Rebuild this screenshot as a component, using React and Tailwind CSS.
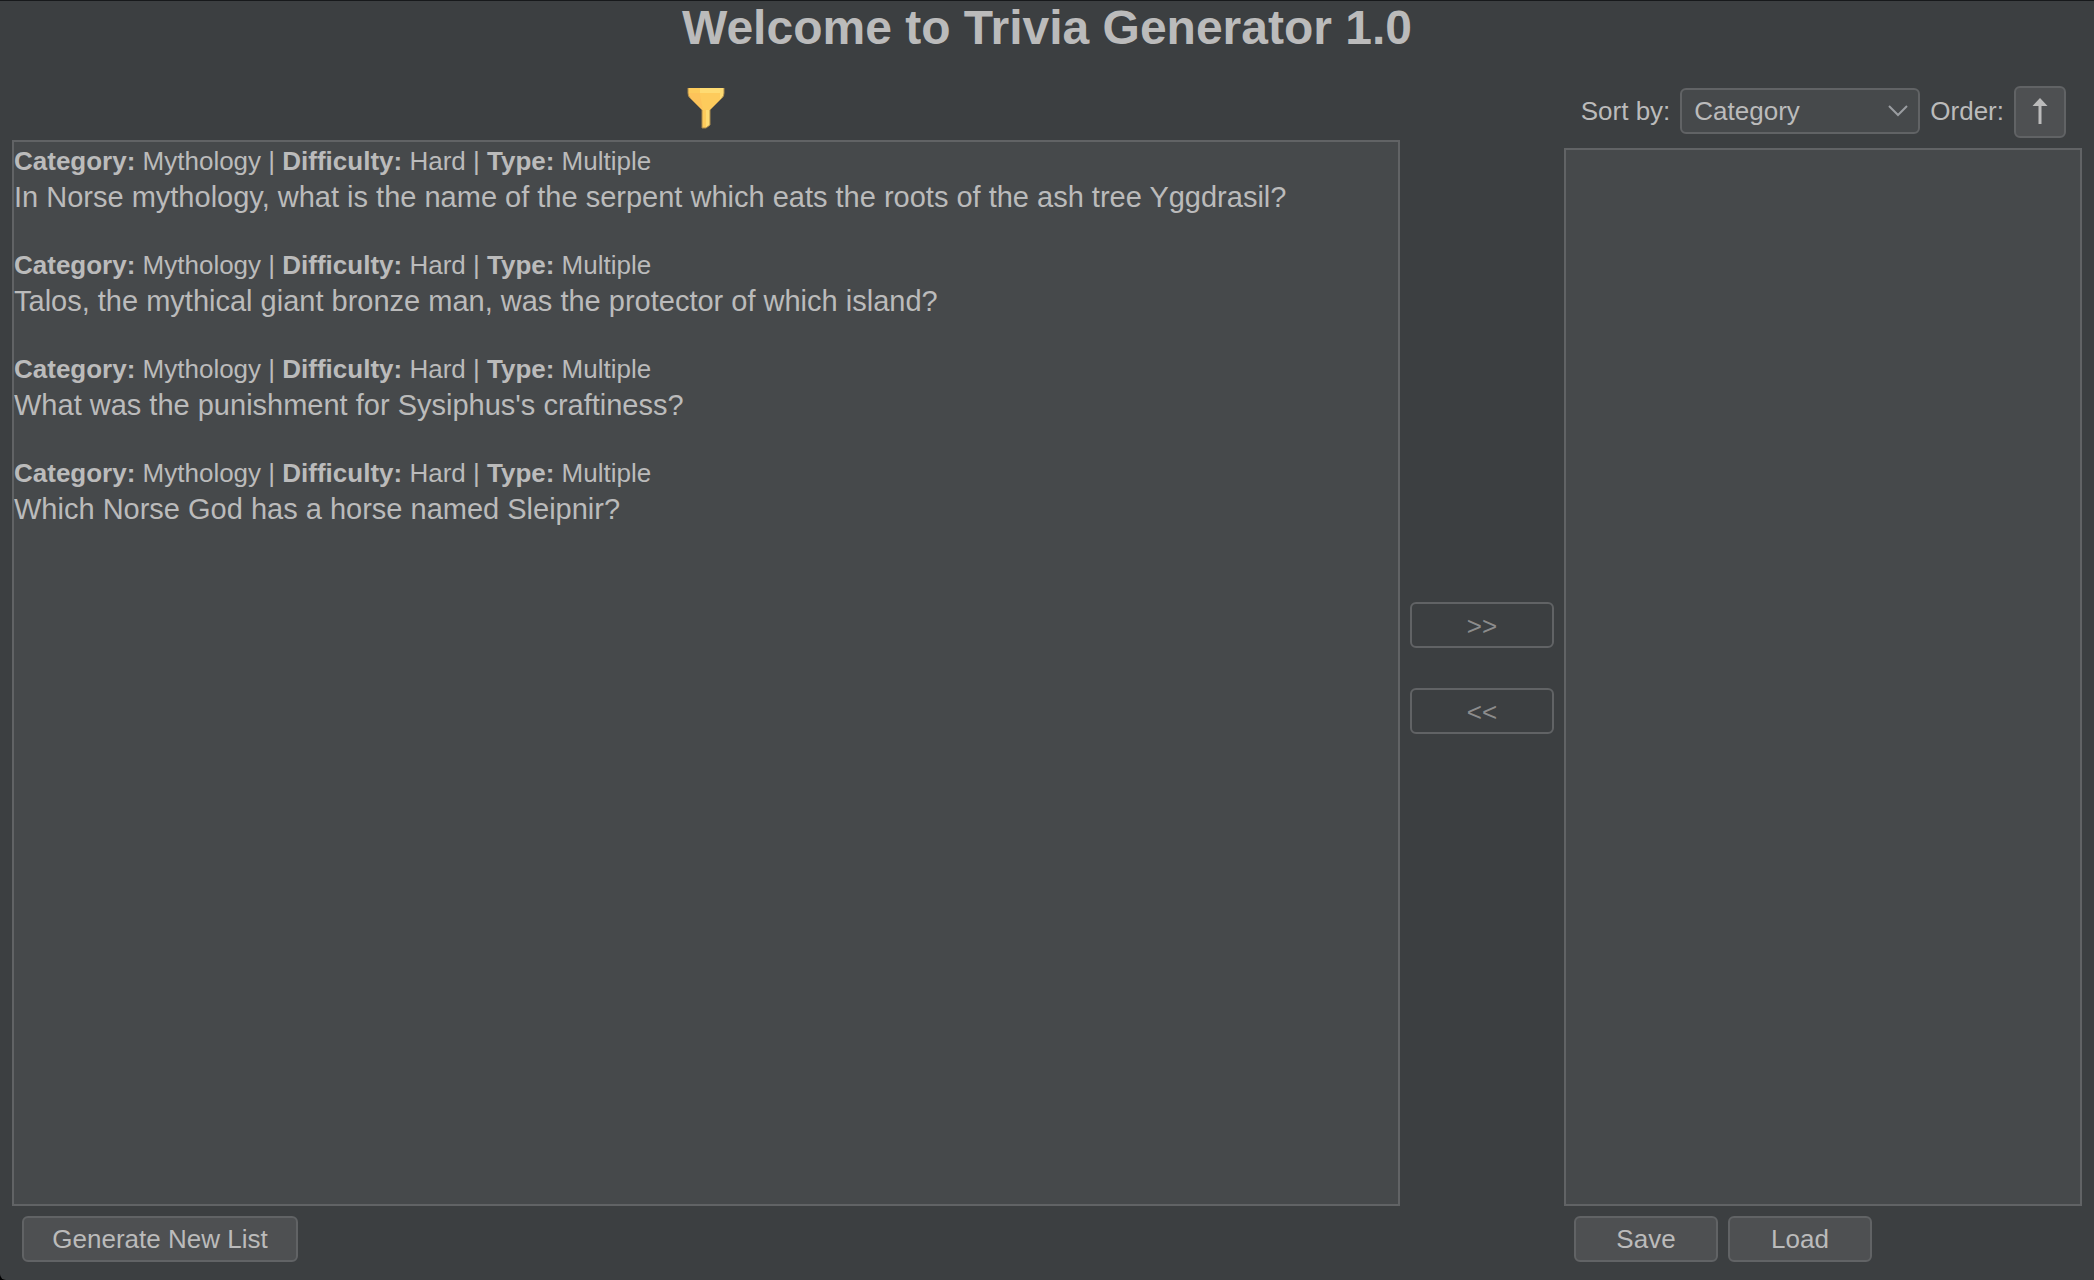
const questions = [
  "In Norse mythology, what is the name of the serpent which eats the roots of the ash tree Yggdrasil?",
  "Talos, the mythical giant bronze man, was the protector of which island?",
  "What was the punishment for Sysiphus's craftiness?",
  "Which Norse God has a horse named Sleipnir?",
];

const button =
  "flex h-[46px] items-center justify-center rounded-md border-2 border-[#616365] bg-[#4e5052] text-[26px] leading-8";

const moveButton =
  "h-[46px] w-36 rounded-md border-2 border-[#616365] pt-0.5 text-[26px] leading-8 text-[#8c8c8c]";

function FunnelIcon() {
  return (
    <svg width="38" height="42" viewBox="0 0 38 42" aria-hidden="true">
      <path d="M1 1H37V6Q37 9 35 11L23 23V38L19 41H15V23L3 11Q1 9 1 6Z" fill="#fdcb5c" />
      <path d="M1 1H13V8L16 23L3 11Q1 9 1 6Z" fill="#fdc35a" />
      <path d="M13 1H37V6H13Z" fill="#fedb73" />
      <path d="M1 1H13V6H1Z" fill="#fdcb5c" />
      <path d="M37 1V6Q37 9 35 11L33 13V1Z" fill="#fedb73" />
      <path d="M19 23H23V38L19 40Z" fill="#fedb73" />
      <path d="M1 1V6Q1 9 3 11L15 23V41H19L23 38V23L35 11Q37 9 37 6V1" fill="none" stroke="#a8894d" strokeWidth="1" />
    </svg>
  );
}

export default function App() {
  return (
    <div className="bg-black">
      <main className="flex h-screen flex-col rounded-bl-md border-t border-[#17191b] bg-[#3c3f41] px-3 font-['Liberation_Sans',sans-serif] text-[#bbbbbb]">
        <h1 className="h-[55px] shrink-0 text-center text-[48px] leading-[54px] font-bold">
          Welcome to Trivia Generator 1.0
        </h1>
        <div className="grid min-h-0 flex-1 grid-cols-[minmax(0,1fr)_164px_518px]">
          <section className="flex min-h-0 flex-col">
            <div className="flex h-[84px] shrink-0 items-end justify-center pb-[11px]">
              <button type="button" aria-label="Filter">
                <FunnelIcon />
              </button>
            </div>
            <ul className="min-h-0 flex-1 overflow-hidden border-2 border-[#616365] bg-[#46494b] pt-0.5">
              {questions.map((question) => (
                <li key={question} className="h-[104px]">
                  <p className="text-[26px] leading-[34px]">
                    <b>Category:</b> Mythology | <b>Difficulty:</b> Hard | <b>Type:</b> Multiple
                  </p>
                  <p className="text-[29px] leading-[38px]">{question}</p>
                </li>
              ))}
            </ul>
            <div className="flex h-[74px] shrink-0 items-start px-2.5 pt-2.5">
              <button type="button" className={`${button} w-[276px]`}>
                Generate New List
              </button>
            </div>
          </section>

          <section className="flex flex-col items-center justify-center gap-10">
            <button type="button" disabled className={moveButton}>
              &gt;&gt;
            </button>
            <button type="button" disabled className={moveButton}>
              &lt;&lt;
            </button>
          </section>

          <section className="flex min-h-0 flex-col">
            <div className="flex h-[92px] shrink-0 items-end justify-end pr-4 pb-2.5 text-[26px] leading-8">
              <div className="flex h-[52px] items-start gap-2.5">
                <div className="flex h-[50px] items-center gap-2.5">
                  <label htmlFor="sort">Sort by:</label>
                  <div className="grid w-60 items-center">
                    <select
                      id="sort"
                      className="col-start-1 row-start-1 h-[46px] w-full appearance-none rounded-md border-2 border-[#616365] bg-[#46494b] pl-3"
                    >
                      <option>Category</option>
                      <option>Difficulty</option>
                      <option>Type</option>
                    </select>
                    <svg
                      className="pointer-events-none col-start-1 row-start-1 mr-3 justify-self-end"
                      width="20"
                      height="12"
                      viewBox="0 0 20 12"
                      fill="none"
                      stroke="#9a9da1"
                      strokeWidth="2"
                      aria-hidden="true"
                    >
                      <path d="M1 1L10 10L19 1" />
                    </svg>
                  </div>
                  <label htmlFor="order">Order:</label>
                </div>
                <button
                  id="order"
                  type="button"
                  className="flex h-[52px] w-[52px] items-center justify-center rounded-md border-2 border-[#616365] bg-[#4e5052] pb-0.5"
                >
                  <svg width="16" height="26" viewBox="0 0 16 26" fill="#bbbbbb" aria-hidden="true">
                    <path d="M8 0L15.5 8H9.5V26H6.5V8H0.5Z" />
                  </svg>
                </button>
              </div>
            </div>
            <div className="min-h-0 flex-1 border-2 border-[#616365] bg-[#46494b]" />
            <div className="flex h-[74px] shrink-0 items-start gap-2.5 px-2.5 pt-2.5">
              <button type="button" className={`${button} w-36`}>
                Save
              </button>
              <button type="button" className={`${button} w-36`}>
                Load
              </button>
            </div>
          </section>
        </div>
      </main>
    </div>
  );
}
